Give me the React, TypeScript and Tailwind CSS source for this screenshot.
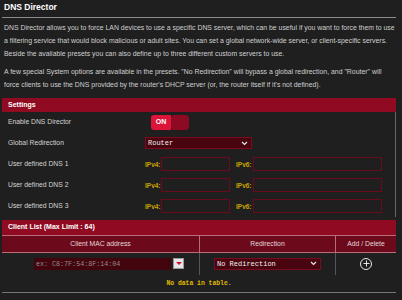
import { Plus } from "lucide-react";

function Chevron() {
  return (
    <svg width="7" height="5" viewBox="0 0 7 5" className="shrink-0">
      <path d="M1 1 L3.5 3.5 L6 1" fill="none" stroke="#e8e8e8" strokeWidth="1.2" />
    </svg>
  );
}

function Select({ value, className }: { value: string; className: string }) {
  return (
    <div
      className={
        "flex items-center justify-between h-[12px] bg-[#48040f] border border-[#7c0a1f] pl-[2px] pr-[3px] font-['Liberation_Mono',monospace] text-[7px] text-[#f2f2f2] " +
        className
      }
    >
      <span>{value}</span>
      <Chevron />
    </div>
  );
}

function DnsRow({ label }: { label: string }) {
  return (
    <div className="flex items-center h-[21px]">
      <div className="w-[143px] pl-[6px]">{label}</div>
      <span className="w-[16px] text-[#c9a300] text-[6.5px] font-bold">IPv4:</span>
      <div className="w-[69px] h-[14px] border border-[#6a0a1c]" />
      <span className="w-[23px] pl-[6px] text-[#c9a300] text-[6.5px] font-bold">IPv6:</span>
      <div className="w-[129px] h-[14px] border border-[#6a0a1c]" />
    </div>
  );
}

export default function App() {
  return (
    <div className="w-[402px] h-[300px] overflow-hidden bg-[#1f1f1f] font-['Liberation_Sans',Arial,sans-serif] text-[#d0d0d0]">
      <div className="pl-[2px] pr-[6px]">
        <div className="h-[18px] border-b border-[#8c8c8c] pl-[2px] text-white font-bold text-[8.5px] leading-[14px]">
          DNS Director
        </div>
        <div className="pl-[2px] pt-[4px] text-[6.9px] leading-[12.8px] whitespace-nowrap">
          <p>
            DNS Director allows you to force LAN devices to use a specific DNS server, which can be useful if you want to force them to use
            <br />
            a filtering service that would block malicious or adult sites. You can set a global network-wide server, or client-specific servers.
            <br />
            Beside the available presets you can also define up to three different custom servers to use.
          </p>
          <p className="mt-[6px]">
            A few special System options are available in the presets. "No Redirection" will bypass a global redirection, and "Router" will
            <br />
            force clients to use the DNS provided by the router's DHCP server (or, the router itself if it's not defined).
          </p>
        </div>

        <div className="mt-[6px] h-[14px] bg-[#900a22] pl-[6px] flex items-center text-white font-bold text-[7px]">
          Settings
        </div>
        <div className="border-r border-[#5d6872] text-[6.8px] text-[#d4d4d4]">
          <div className="flex items-center h-[21px]">
            <div className="w-[149px] pl-[6px]">Enable DNS Director</div>
            <div className="flex w-[38px] h-[15px] rounded-[3px] overflow-hidden">
              <div className="w-[20px] bg-[#dc143a] flex items-center justify-center text-white font-bold text-[7px]">
                ON
              </div>
              <div className="flex-1 bg-[#8e0a22] rounded-[3px]" />
            </div>
          </div>
          <div className="flex items-center h-[21px]">
            <div className="w-[143px] pl-[6px]">Global Redirection</div>
            <Select value="Router" className="w-[107px]" />
          </div>
          <DnsRow label="User defined DNS 1" />
          <DnsRow label="User defined DNS 2" />
          <DnsRow label="User defined DNS 3" />
        </div>

        <div className="mt-[3px] h-[15px] bg-[#900a22] pl-[6px] flex items-center text-white font-bold text-[7px]">
          Client List (Max Limit : 64)
        </div>
        <div className="flex h-[18px] bg-[#6c0a1c] border-t border-b border-[#b86b78] text-[6.8px] text-[#e2d6d8]">
          <div className="w-[198px] flex items-center justify-center border-r border-[#b86b78]">Client MAC address</div>
          <div className="w-[136px] flex items-center justify-center border-r border-[#b86b78]">Redirection</div>
          <div className="flex-1 flex items-center justify-center">Add / Delete</div>
        </div>
        <div className="flex h-[22px]">
          <div className="w-[198px] flex items-center pl-[32px] border-r border-[#555]">
            <div className="w-[137px] h-[12px] bg-[#42050e] pl-[2px] flex items-center font-['Liberation_Mono',monospace] text-[6.7px] text-[#9a8a8c]">
              ex: C8:7F:54:8F:14:04
            </div>
            <div className="ml-[2px] w-[11px] h-[11px] bg-[#e6e6e6] border border-[#999] flex items-center justify-center">
              <div className="w-0 h-0 border-l-[3px] border-r-[3px] border-t-[3px] border-l-transparent border-r-transparent border-t-[#d0102e]" />
            </div>
          </div>
          <div className="w-[136px] flex items-center pl-[14px] border-r border-[#555]">
            <Select value="No Redirection" className="w-[107px]" />
          </div>
          <div className="flex-1 flex items-center justify-center">
            <div className="w-[12px] h-[12px] rounded-full border border-[#e8e8e8] flex items-center justify-center">
              <Plus size={9} color="#f0f0f0" strokeWidth={2.5} />
            </div>
          </div>
        </div>
        <div className="h-[18px] border-b border-[#777] flex items-center justify-center font-['Liberation_Mono',monospace] font-bold text-[6.4px] text-[#e0bb00]">
          No data in table.
        </div>
      </div>
    </div>
  );
}
